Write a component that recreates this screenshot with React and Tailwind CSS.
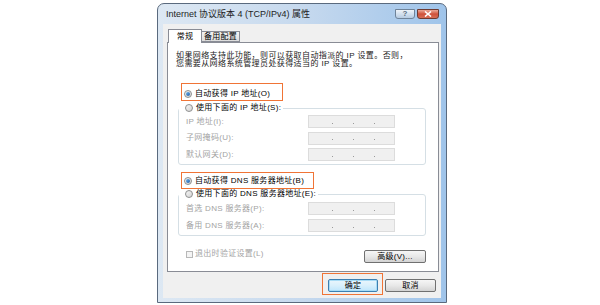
import React from "react";

const font = { fontFamily: '"Liberation Sans", "Noto Sans CJK SC", sans-serif' };

function Radio({ checked }) {
  return (
    <span className="relative flex h-[8px] w-[8px] shrink-0 items-center justify-center rounded-full border border-[#8e8f8f] bg-gradient-to-br from-[#f4f4f4] to-[#d4d4d4]">
      {checked && (
        <span className="h-[4px] w-[4px] rounded-full bg-gradient-to-br from-[#6fb3ea] to-[#1f5aa6]" />
      )}
    </span>
  );
}

function IpBox() {
  return (
    <div className="flex h-[13px] w-[87px] items-center gap-[20px] border border-[#dcdcdc] bg-[#f0f0f0] pl-[23px] pt-[3px]">
      <span className="h-[1px] w-[1px] bg-[#9a9a9a]" />
      <span className="h-[1px] w-[1px] bg-[#9a9a9a]" />
      <span className="h-[1px] w-[1px] bg-[#9a9a9a]" />
    </div>
  );
}

function Row({ label }) {
  return (
    <div className="flex h-[13px] items-center pl-[7px] pr-[30px]">
      <span className="flex-1 text-[8px] leading-[8px] text-[#a3a3a3]">{label}</span>
      <IpBox />
    </div>
  );
}

function WinButton({ children, def, className }) {
  return (
    <div
      className={
        "flex h-[13px] items-center justify-center rounded-[2px] border bg-gradient-to-b text-[8px] leading-[8px] text-black " +
        (def
          ? "border-[#3c7fb1] from-[#eaf6fd] via-[#d9f0fc] to-[#bee6fd] shadow-[inset_0_0_0_1px_#a8dcf6]"
          : "border-[#707070] from-[#f6f6f6] via-[#e8e8e8] to-[#d3d3d3]") +
        " " +
        className
      }
    >
      {children}
    </div>
  );
}

export default function App() {
  return (
    <div className="relative h-[305px] w-[600px] overflow-hidden bg-white pl-[157px] pt-[3px] tracking-[0.3px]" style={font}>
      {/* window */}
      <div className="flex h-[300px] w-[290px] flex-col rounded-t-[7px] border border-[#5a6a7e] bg-gradient-to-r from-[#dde8f3] via-[#c6d9ee] to-[#9fc4ea]">
        {/* title bar */}
        <div className="flex h-[20px] items-center pl-[8px] pr-[7px]">
          <span className="text-[9px] leading-[9px] tracking-normal text-[#1e1e1e]">Internet 协议版本 4 (TCP/IPv4) 属性</span>
          <div className="ml-auto flex gap-[2px] self-start pt-[5px]">
            <div className="flex h-[10px] w-[20px] items-center justify-center rounded-b-[3px] border border-[#6f8399] bg-gradient-to-b from-[#eef3f9] via-[#d3e0ee] to-[#b6cbe2] text-[8px] font-bold leading-[8px] text-[#5a6d82]">
              ?
            </div>
            <div className="flex h-[10px] w-[22px] items-center justify-center rounded-b-[3px] border border-[#6d3b33] bg-gradient-to-b from-[#e9a898] via-[#cf513a] to-[#d66d55]">
              <svg width="8" height="6" viewBox="0 0 8 6">
                <path d="M1 0.5 L7 5.5 M7 0.5 L1 5.5" stroke="white" strokeWidth="1.6" />
              </svg>
            </div>
          </div>
        </div>
        {/* body */}
        <div className="mx-[5px] mb-[4px] flex flex-1 flex-col bg-[#f0f0f0] pl-[4px] pr-[2px]">
          {/* tabs */}
          <div className="relative z-10 -mb-px flex items-end pl-[1px] pt-[5px]">
            <div className="flex h-[14px] w-[34px] items-center justify-center border border-b-0 border-[#898c95] bg-white text-[8px] leading-[8px] text-black">
              常规
            </div>
            <div className="mb-px flex h-[11px] w-[38px] items-center justify-center border border-l-0 border-[#898c95] bg-gradient-to-b from-[#f3f3f3] to-[#dcdcdc] text-[8px] leading-[8px] text-black">
              备用配置
            </div>
          </div>
          {/* panel */}
          <div className="flex h-[230px] flex-col border border-[#898c95] bg-white">
            <p className="mt-[9px] pl-[8px] text-[8px] leading-[8px] tracking-[0.4px] text-[#222]">
              如果网络支持此功能，则可以获取自动指派的 IP 设置。否则，
              <br />
              您需要从网络系统管理员处获得适当的 IP 设置。
            </p>
            <div className="mt-[20px] flex h-[12px] items-center gap-[3px] pl-[16px]">
              <Radio checked />
              <span className="text-[8px] leading-[8px] text-black">自动获得 IP 地址(O)</span>
            </div>
            <div className="ml-[10px] mr-[12px] mt-[8px] flex flex-col rounded-[3px] border border-[#d5dfe5] pb-[3px]">
              <div className="-mt-[7px] flex h-[12px] w-fit items-center gap-[3px] bg-white pl-[6px] pr-[2px]">
                <Radio />
                <span className="text-[8px] leading-[8px] text-black">使用下面的 IP 地址(S):</span>
              </div>
              <div className="mt-[1px] flex flex-col gap-[3.5px]">
                <Row label="IP 地址(I):" />
                <Row label="子网掩码(U):" />
                <Row label="默认网关(D):" />
              </div>
            </div>
            <div className="mt-[10px] flex h-[12px] items-center gap-[3px] pl-[16px]">
              <Radio checked />
              <span className="text-[8px] leading-[8px] text-black">自动获得 DNS 服务器地址(B)</span>
            </div>
            <div className="ml-[10px] mr-[12px] mt-[7px] flex flex-col rounded-[3px] border border-[#d5dfe5] pb-[3px]">
              <div className="-mt-[7px] flex h-[12px] w-fit items-center gap-[3px] bg-white pl-[6px] pr-[2px]">
                <Radio />
                <span className="text-[8px] leading-[8px] text-black">使用下面的 DNS 服务器地址(E):</span>
              </div>
              <div className="mt-[2px] flex flex-col gap-[4px]">
                <Row label="首选 DNS 服务器(P):" />
                <Row label="备用 DNS 服务器(A):" />
              </div>
            </div>
            <div className="mt-[14px] flex items-start justify-between pl-[18px] pr-[12px]">
              <div className="flex items-center gap-[2px]">
                <span className="h-[7px] w-[7px] border border-[#b8b8b8] bg-[#f4f4f4]" />
                <span className="text-[8px] leading-[8px] text-[#a3a3a3]">退出时验证设置(L)</span>
              </div>
              <WinButton className="w-[62px]">高级(V)...</WinButton>
            </div>
          </div>
          {/* bottom buttons */}
          <div className="mt-[7px] flex justify-end gap-[7px] pr-[3px]">
            <WinButton def className="w-[50px]">确定</WinButton>
            <WinButton className="w-[51px]">取消</WinButton>
          </div>
        </div>
      </div>

      {/* annotation highlights */}
      <div className="absolute left-[181px] top-[83px] h-[18px] w-[102px] border-[1.5px] border-[#f07436]" />
      <div className="absolute left-[181px] top-[172px] h-[17px] w-[133px] border-[1.5px] border-[#f07436]" />
      <div className="absolute left-[322px] top-[273px] h-[22px] w-[61px] border-[1.5px] border-[#f07436]" />
    </div>
  );
}
